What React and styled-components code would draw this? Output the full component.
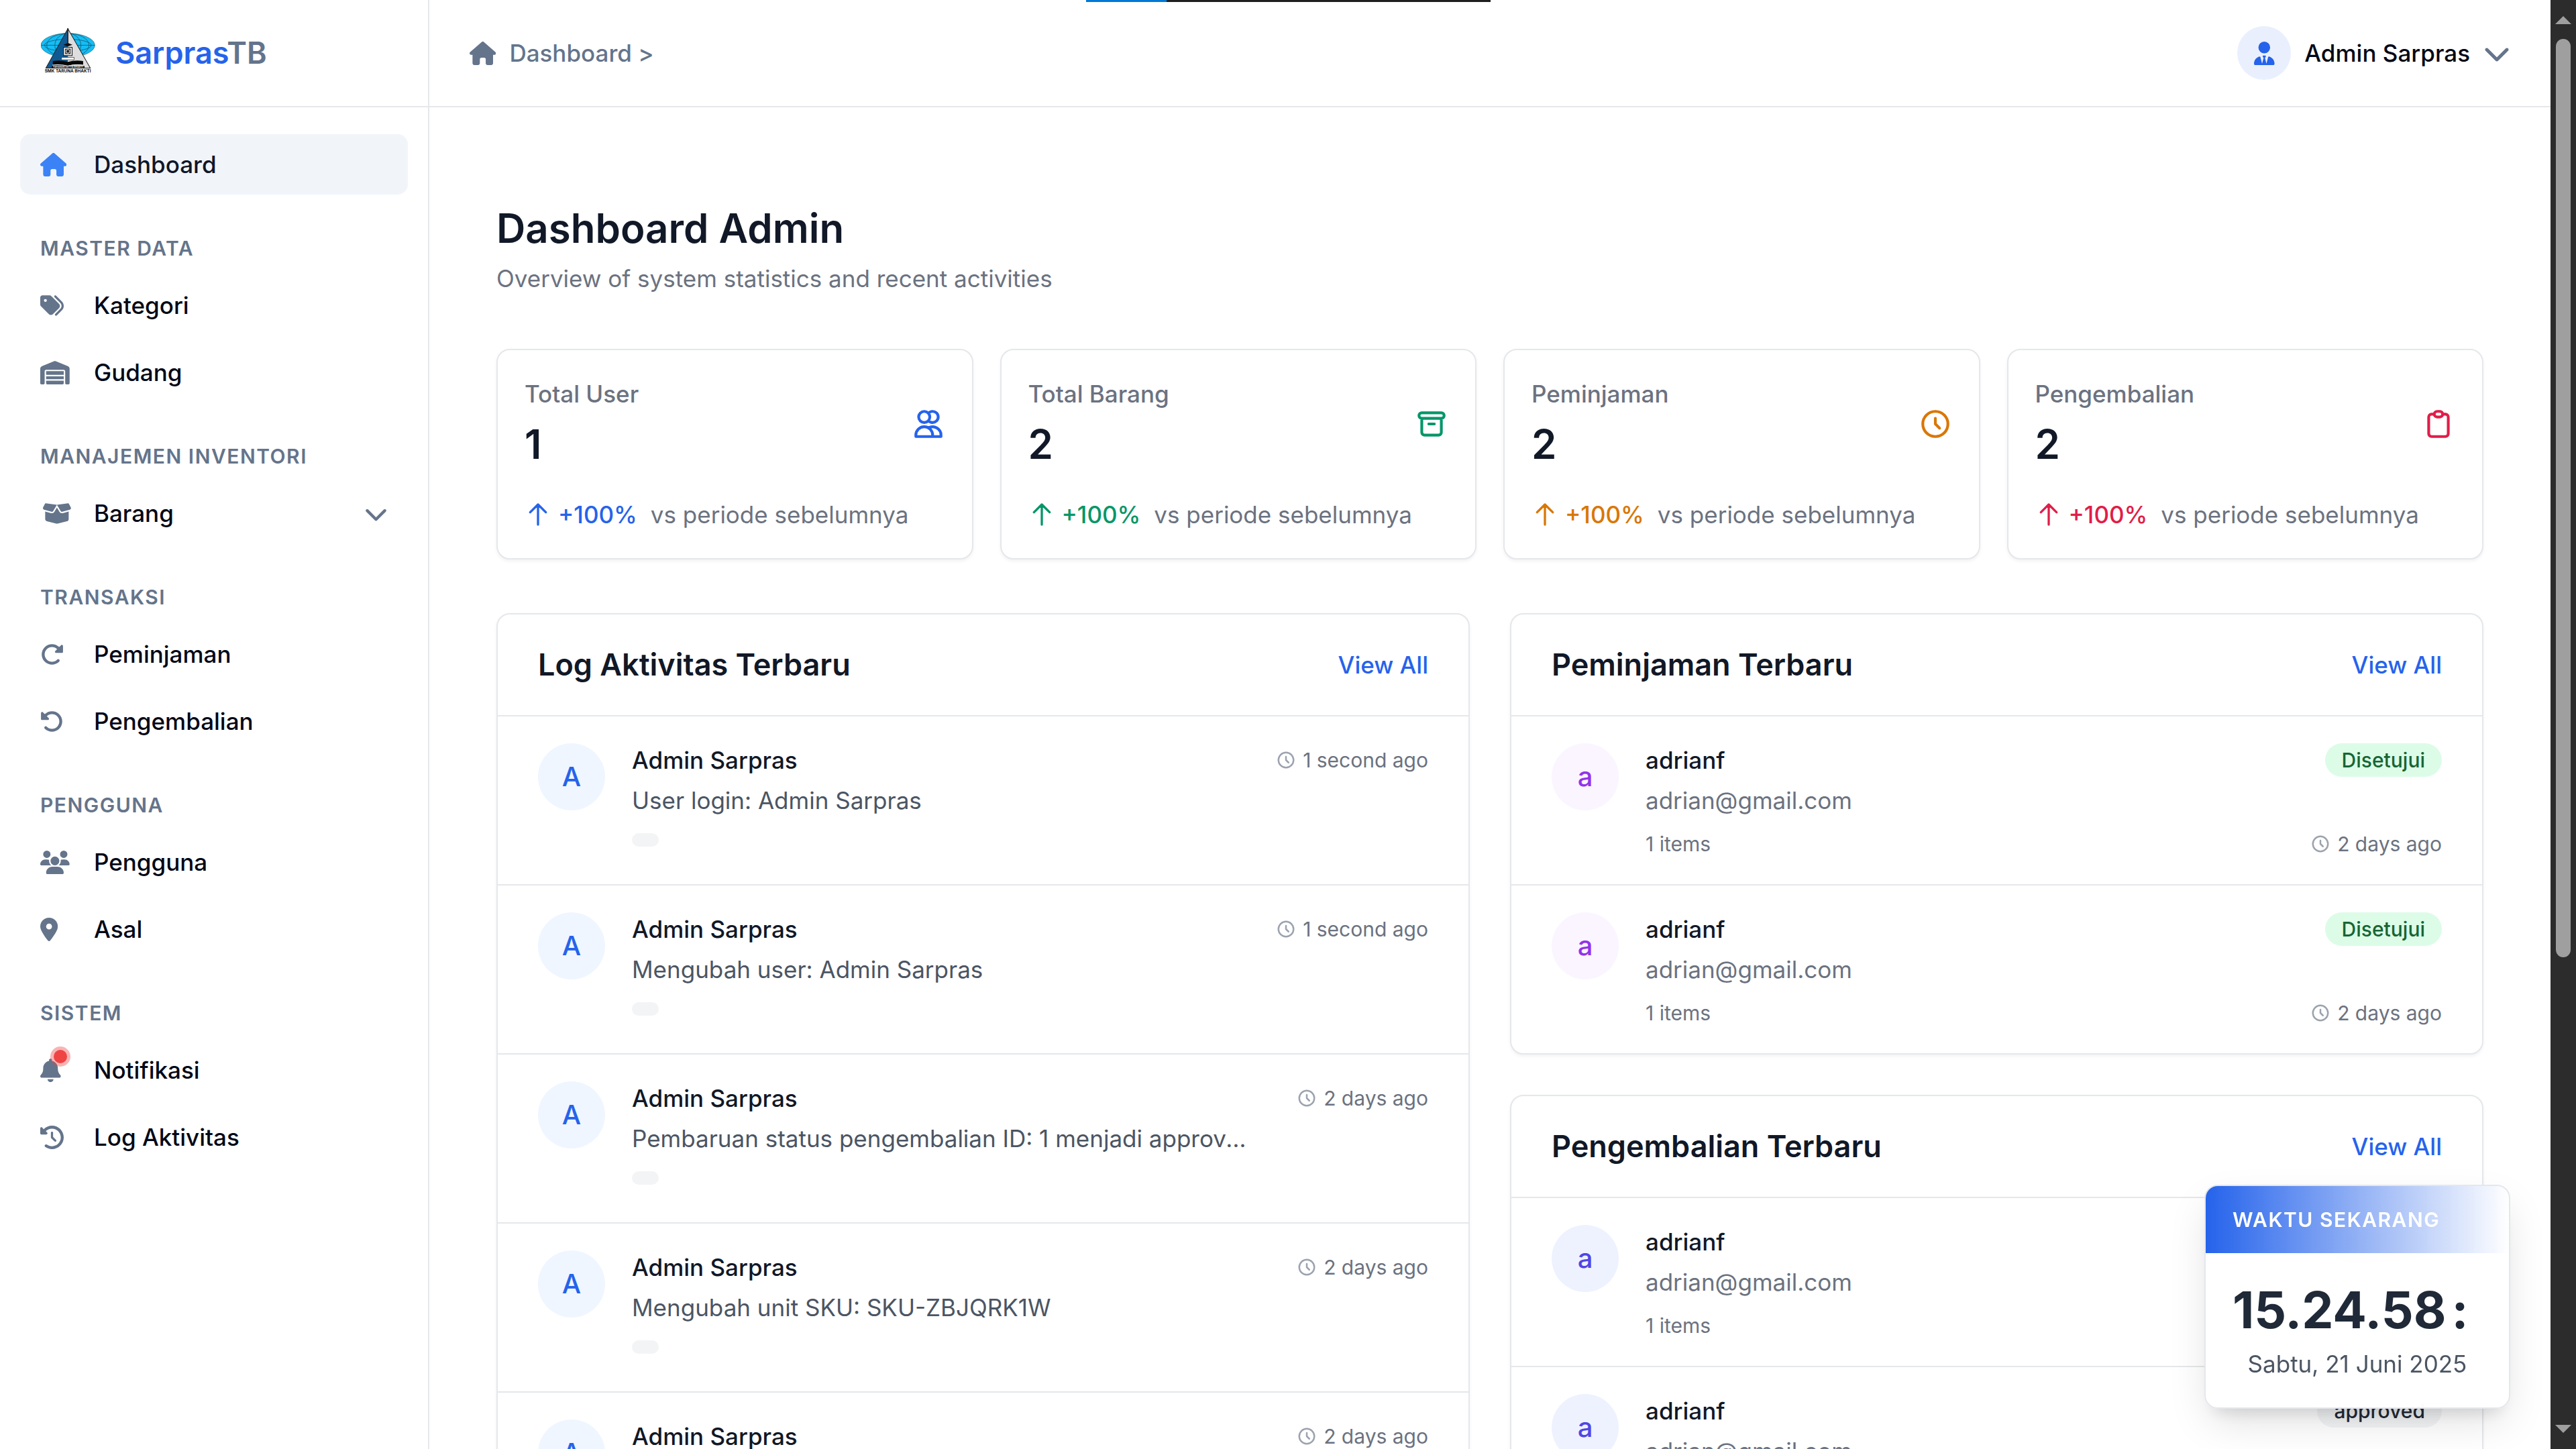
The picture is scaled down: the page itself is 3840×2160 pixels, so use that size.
import React from "react";
import styled, { createGlobalStyle, css } from "styled-components";
import {
  FaHouse,
  FaTags,
  FaWarehouse,
  FaBoxOpen,
  FaRotateRight,
  FaRotateLeft,
  FaUsers,
  FaLocationDot,
  FaBell,
  FaClockRotateLeft,
  FaChevronDown,
  FaUserTie,
} from "react-icons/fa6";
import {
  HiOutlineUsers,
  HiOutlineArchive,
  HiOutlineClock,
  HiOutlineClipboard,
  HiOutlineArrowUp,
} from "react-icons/hi";

const GlobalStyle = createGlobalStyle`
  *, *::before, *::after { box-sizing: border-box; }
  html, body { margin: 0; background: #ffffff; overflow: hidden; }
  body {
    font-family: Inter, "Liberation Sans", sans-serif;
    font-size: 35px;
    line-height: 50px;
    color: #020817;
  }
  svg { display: block; flex-shrink: 0; }
`;

const line = "2px solid #e5e7eb";

/* Solid glyphs share one height; their width follows the glyph's own grid. */
const glyphSize = css`
  svg {
    height: 35px;
    width: ${(p) => ((p.$grid || 512) * 35) / 512}px;
  }
`;

const Screen = styled.div`
  position: relative;
  display: flex;
  width: 3840px;
  height: 2160px;
  overflow: hidden;
`;

/* ---------- sidebar ---------- */

const Sidebar = styled.aside`
  width: 640px;
  flex-shrink: 0;
  border-right: ${line};
`;

const Brand = styled.div`
  display: flex;
  align-items: center;
  gap: 30px;
  height: 160px;
  padding: 0 60px;
  border-bottom: ${line};
  font-size: 45px;
  line-height: 70px;
  font-weight: 600;
  color: #64748b;
  b {
    font-weight: 600;
    color: #2563eb;
  }
`;

const LogoImage = styled.svg`
  width: 81px;
  height: 67px;
  margin: -7px 0 0 1px;
`;

const Nav = styled.nav`
  display: flex;
  flex-direction: column;
  gap: 60px;
  padding: 40px 30px;
`;

const NavGroup = styled.div`
  display: flex;
  flex-direction: column;
  gap: 10px;
`;

const NavLabel = styled.h3`
  margin: 0 0 10px;
  padding: 0 30px;
  font-size: 30px;
  line-height: 40px;
  font-weight: 600;
  letter-spacing: 1.5px;
  text-transform: uppercase;
  color: #64748b;
`;

const NavItem = styled.a`
  display: flex;
  align-items: center;
  gap: 30px;
  height: 90px;
  padding: 0 30px;
  border-radius: 15px;
  font-weight: 500;
  ${(p) =>
    p.$active &&
    css`
      background: #f1f5f9;
      color: #0f172a;
    `}
`;

const NavIcon = styled.span`
  position: relative;
  display: flex;
  justify-content: ${(p) => (p.$centered ? "center" : "flex-start")};
  width: 50px;
  color: ${(p) => (p.$active ? "#3b82f6" : "#64748b")};
  ${glyphSize}
`;

const NavText = styled.span`
  flex: 1;
`;

const Chevron = styled(FaChevronDown)`
  width: ${(p) => p.$size}px;
  height: ${(p) => p.$size}px;
  color: #64748b;
`;

const AlertDot = styled.span`
  position: absolute;
  left: 15px;
  top: -18px;
  width: 30px;
  height: 30px;
  border-radius: 50%;
  background: rgba(239, 68, 68, 0.4);
  &::after {
    content: "";
    position: absolute;
    inset: 5px;
    border-radius: 50%;
    background: #ef4444;
  }
`;

/* ---------- main column ---------- */

const Main = styled.main`
  flex: 1;
  min-width: 0;
`;

const TopBar = styled.header`
  display: flex;
  align-items: center;
  justify-content: space-between;
  height: 160px;
  padding: 0 60px;
  border-bottom: ${line};
`;

const Breadcrumb = styled.div`
  display: flex;
  align-items: center;
  gap: 20px;
  font-weight: 500;
  color: #64748b;
  ${glyphSize}
`;

const UserMenu = styled.div`
  display: flex;
  align-items: center;
  gap: 20px;
  font-weight: 500;
`;

const UserBadge = styled.span`
  display: flex;
  align-items: center;
  justify-content: center;
  width: 80px;
  height: 80px;
  border-radius: 50%;
  background: #e9effd;
  color: #2563eb;
  ${glyphSize}
`;

const Content = styled.div`
  padding: 140px 100px 0;
`;

const PageTitle = styled.h1`
  margin: 0;
  font-size: 60px;
  line-height: 80px;
  font-weight: 600;
  color: #111827;
`;

const PageLead = styled.p`
  margin: 10px 0 80px;
  color: #6b7280;
`;

const StatGrid = styled.section`
  display: grid;
  grid-template-columns: repeat(4, 1fr);
  gap: 40px;
`;

const cardSurface = css`
  background: #ffffff;
  border: ${line};
  border-radius: 20px;
  box-shadow: 0 2.5px 5px rgba(0, 0, 0, 0.05);
`;

const StatCard = styled.article`
  ${cardSurface}
  padding: 40px;
`;

const StatTop = styled.div`
  display: flex;
  align-items: center;
  justify-content: space-between;
  color: ${(p) => p.$tone};
  svg {
    width: 50px;
    height: 50px;
  }
`;

const StatLabel = styled.div`
  font-weight: 500;
  color: #6b7280;
`;

const StatValue = styled.div`
  margin-top: 10px;
  font-size: 60px;
  line-height: 80px;
  font-weight: 600;
  color: #111827;
`;

const Trend = styled.div`
  display: flex;
  align-items: center;
  margin-top: 40px;
  color: #6b7280;
`;

const TrendRate = styled.span`
  display: flex;
  align-items: center;
  gap: 10px;
  margin-right: 20px;
  font-weight: 500;
  color: ${(p) => p.$tone};
  svg {
    width: 40px;
    height: 40px;
  }
`;

const PanelGrid = styled.section`
  display: grid;
  grid-template-columns: 1fr 1fr;
  align-items: start;
  gap: 60px;
  margin-top: 80px;
`;

const PanelStack = styled.div`
  display: flex;
  flex-direction: column;
  gap: 60px;
`;

const Panel = styled.article`
  ${cardSurface}
`;

const PanelHead = styled.div`
  display: flex;
  align-items: center;
  justify-content: space-between;
  height: 152px;
  padding: 0 60px;
  border-bottom: ${line};
`;

const PanelTitle = styled.h2`
  margin: 0;
  font-size: 45px;
  line-height: 70px;
  font-weight: 600;
  color: #111827;
`;

const PanelLink = styled.a`
  font-weight: 500;
  color: #2563eb;
`;

const Row = styled.div`
  display: flex;
  gap: 40px;
  padding: 40px 60px;
  & + & {
    border-top: ${line};
  }
`;

const avatarTones = {
  blue: css`
    background: #eff6ff;
    color: #2563eb;
  `,
  purple: css`
    background: #faf5ff;
    color: #9333ea;
  `,
  indigo: css`
    background: #eef2ff;
    color: #4f46e5;
  `,
};

const Avatar = styled.div`
  display: flex;
  align-items: center;
  justify-content: center;
  flex-shrink: 0;
  width: 100px;
  height: 100px;
  border-radius: 50%;
  font-size: 40px;
  font-weight: 500;
  ${(p) => avatarTones[p.$tone]}
`;

const RowBody = styled.div`
  flex: 1;
  min-width: 0;
`;

const RowLine = styled.div`
  display: flex;
  align-items: center;
  justify-content: space-between;
`;

const Name = styled.div`
  font-weight: 500;
  color: #111827;
`;

const Detail = styled.div`
  margin-top: 10px;
  max-width: ${(p) => (p.$clip ? "920px" : "none")};
  overflow: hidden;
  text-overflow: ellipsis;
  white-space: nowrap;
  color: ${(p) => (p.$muted ? "#6b7280" : "#4b5563")};
`;

const Meta = styled(RowLine)`
  height: 40px;
  margin-top: 20px;
  font-size: 30px;
  line-height: 40px;
  color: #6b7280;
`;

const EmptyTag = styled.span`
  width: 40px;
  height: 20px;
  margin-bottom: 12px;
  border-radius: 10px;
  background: #f3f4f6;
`;

const Time = styled.span`
  display: flex;
  align-items: center;
  gap: 10px;
  font-size: 30px;
  line-height: 40px;
  color: #6b7280;
  svg {
    width: 30px;
    height: 30px;
    color: #9ca3af;
  }
`;

const Status = styled.span`
  height: 50px;
  padding: 0 25px;
  border-radius: 25px;
  font-size: 30px;
  font-weight: 500;
  background: ${(p) => (p.$ok ? "#dcfce7" : "#f3f4f6")};
  color: ${(p) => (p.$ok ? "#166534" : "#1f2937")};
`;

/* ---------- overlays ---------- */

const ClockCard = styled.div`
  position: absolute;
  right: 98px;
  bottom: 60px;
  width: 456px;
  overflow: hidden;
  border: ${line};
  border-radius: 20px;
  background: rgba(255, 255, 255, 0.95);
  backdrop-filter: blur(20px);
  box-shadow: 0 25px 62px -8px rgba(0, 0, 0, 0.13), 0 20px 25px -15px rgba(0, 0, 0, 0.12);
`;

const ClockHead = styled.div`
  padding: 30px 40px;
  font-size: 30px;
  line-height: 40px;
  font-weight: 600;
  letter-spacing: 1.5px;
  color: #ffffff;
  background: linear-gradient(to right, #2563eb, rgba(37, 99, 235, 0));
`;

const ClockBody = styled.div`
  padding: 40px;
  text-align: center;
  color: #4b5563;
`;

const ClockTime = styled.div`
  display: flex;
  gap: 8px;
  margin-bottom: 10px;
  font-size: 75px;
  line-height: 90px;
  font-weight: 700;
  letter-spacing: -0.1px;
  color: #1f2937;
`;

const WindowGrip = styled.div`
  position: absolute;
  top: 0;
  left: 1619px;
  display: flex;
  width: 603px;
  height: 3px;
  background: #1f1f1f;
  &::before {
    content: "";
    width: 120px;
    background: #0078d4;
  }
`;

const Scrollbar = styled.div`
  display: flex;
  flex-direction: column;
  align-items: center;
  width: 38px;
  flex-shrink: 0;
  padding: 24px 0;
  background: #2c2c2c;
`;

const ScrollThumb = styled.div`
  width: 22px;
  height: 1369px;
  margin: 22px 0 auto;
  border-radius: 11px;
  background: #9f9f9f;
`;

const ScrollArrow = styled.div`
  border: 12px solid transparent;
  ${(p) =>
    p.$up
      ? css`
          border-top: 0;
          border-bottom-color: #9f9f9f;
        `
      : css`
          border-bottom: 0;
          border-top-color: #9f9f9f;
        `}
`;

/* ---------- data ---------- */

const navGroups = [
  { items: [{ text: "Dashboard", icon: FaHouse, grid: 576, active: true }] },
  {
    label: "Master Data",
    items: [
      { text: "Kategori", icon: FaTags },
      { text: "Gudang", icon: FaWarehouse, grid: 640 },
    ],
  },
  {
    label: "Manajemen Inventori",
    items: [{ text: "Barang", icon: FaBoxOpen, grid: 640, expandable: true }],
  },
  {
    label: "Transaksi",
    items: [
      { text: "Peminjaman", icon: FaRotateRight },
      { text: "Pengembalian", icon: FaRotateLeft },
    ],
  },
  {
    label: "Pengguna",
    items: [
      { text: "Pengguna", icon: FaUsers, grid: 640 },
      { text: "Asal", icon: FaLocationDot, grid: 384 },
    ],
  },
  {
    label: "Sistem",
    items: [
      { text: "Notifikasi", icon: FaBell, grid: 448, alert: true },
      { text: "Log Aktivitas", icon: FaClockRotateLeft },
    ],
  },
];

const stats = [
  { label: "Total User", value: 1, icon: HiOutlineUsers, tone: "#2563eb" },
  { label: "Total Barang", value: 2, icon: HiOutlineArchive, tone: "#059669" },
  { label: "Peminjaman", value: 2, icon: HiOutlineClock, tone: "#d97706" },
  { label: "Pengembalian", value: 2, icon: HiOutlineClipboard, tone: "#e11d48" },
];

const logs = [
  { detail: "User login: Admin Sarpras", time: "1 second ago" },
  { detail: "Mengubah user: Admin Sarpras", time: "1 second ago" },
  { detail: "Pembaruan status pengembalian ID: 1 menjadi approved", time: "2 days ago" },
  { detail: "Mengubah unit SKU: SKU-ZBJQRK1W", time: "2 days ago" },
  { detail: "Mengubah unit SKU: SKU-ZBJQRK1W", time: "2 days ago" },
];

/* ---------- parts ---------- */

function Logo() {
  return (
    <LogoImage viewBox="62 62 242 200">
      <ellipse cx="182" cy="138" rx="120" ry="53" fill="#14bdf5" stroke="#22606f" strokeWidth="2" />
      <g fill="none" stroke="#155a73" strokeWidth="2.5">
        <ellipse cx="182" cy="138" rx="94" ry="53" />
        <ellipse cx="182" cy="138" rx="58" ry="53" />
        <ellipse cx="182" cy="138" rx="104" ry="27" />
        <path d="M62 138H302" />
      </g>
      <path d="M182 64L84 240H182Z" fill="#105a94" />
      <path d="M182 64L282 240H182Z" fill="#dedede" />
      <path d="M182 64L84 240H282Z" fill="none" stroke="#222" strokeWidth="3" />
      <path d="M182 62V132" stroke="#111" strokeWidth="4" />
      <path d="M162 136l20-8 20 8-20 7z" fill="#111" />
      <rect x="163" y="147" width="38" height="37" fill="#eee" stroke="#111" strokeWidth="3" />
      <rect x="170" y="153" width="24" height="24" fill="#222" />
      <circle cx="182" cy="165" r="8" fill="none" stroke="#ddd" strokeWidth="3" />
      <rect x="154" y="192" width="56" height="11" fill="#f1f1f1" stroke="#333" strokeWidth="2" />
      <path d="M115 208q34-6 67 4q33-10 68-4v18q-35-6-68 3q-33-9-67-3z" fill="#080808" />
      <path d="M113 226q36-4 69 4q33-8 69-4" fill="none" stroke="#eee" strokeWidth="3" />
      <rect x="110" y="230" width="146" height="10" fill="#111" />
      <text x="183" y="239" fontSize="10" fontWeight="700" fill="#eee" textAnchor="middle" textLength="134" lengthAdjust="spacingAndGlyphs">
        YAYASAN SETYA BHAKTI
      </text>
      <text x="182" y="259" fontSize="18" fontWeight="700" fill="#111" textAnchor="middle" textLength="206" lengthAdjust="spacingAndGlyphs">
        SMK TARUNA BHAKTI
      </text>
    </LogoImage>
  );
}

function NavLink({ text, icon: Icon, grid, active, expandable, alert }) {
  return (
    <NavItem $active={active}>
      <NavIcon $active={active} $centered={expandable} $grid={grid}>
        <Icon />
        {alert && <AlertDot />}
      </NavIcon>
      <NavText>{text}</NavText>
      {expandable && <Chevron $size={35} />}
    </NavItem>
  );
}

function Ago({ children }) {
  return (
    <Time>
      <HiOutlineClock />
      {children}
    </Time>
  );
}

function PanelHeader({ title }) {
  return (
    <PanelHead>
      <PanelTitle>{title}</PanelTitle>
      <PanelLink>View All</PanelLink>
    </PanelHead>
  );
}

function LoanRow({ tone, status, ok }) {
  return (
    <Row>
      <Avatar $tone={tone}>a</Avatar>
      <RowBody>
        <RowLine>
          <Name>adrianf</Name>
          <Status $ok={ok}>{status}</Status>
        </RowLine>
        <Detail $muted>adrian@gmail.com</Detail>
        <Meta>
          1 items
          <Ago>2 days ago</Ago>
        </Meta>
      </RowBody>
    </Row>
  );
}

export default function App() {
  return (
    <>
      <GlobalStyle />
      <Screen>
        <Sidebar>
          <Brand>
            <Logo />
            <span>
              <b>Sarpras</b>TB
            </span>
          </Brand>
          <Nav>
            {navGroups.map((group, i) => (
              <NavGroup key={i}>
                {group.label && <NavLabel>{group.label}</NavLabel>}
                {group.items.map((item) => (
                  <NavLink key={item.text} {...item} />
                ))}
              </NavGroup>
            ))}
          </Nav>
        </Sidebar>

        <Main>
          <TopBar>
            <Breadcrumb $grid={576}>
              <FaHouse />
              <span>Dashboard &gt;</span>
            </Breadcrumb>
            <UserMenu>
              <UserBadge $grid={448}>
                <FaUserTie />
              </UserBadge>
              Admin Sarpras
              <Chevron $size={40} />
            </UserMenu>
          </TopBar>

          <Content>
            <PageTitle>Dashboard Admin</PageTitle>
            <PageLead>Overview of system statistics and recent activities</PageLead>

            <StatGrid>
              {stats.map(({ label, value, icon: Icon, tone }) => (
                <StatCard key={label}>
                  <StatTop $tone={tone}>
                    <div>
                      <StatLabel>{label}</StatLabel>
                      <StatValue>{value}</StatValue>
                    </div>
                    <Icon />
                  </StatTop>
                  <Trend>
                    <TrendRate $tone={tone}>
                      <HiOutlineArrowUp />
                      +100%
                    </TrendRate>
                    vs periode sebelumnya
                  </Trend>
                </StatCard>
              ))}
            </StatGrid>

            <PanelGrid>
              <Panel>
                <PanelHeader title="Log Aktivitas Terbaru" />
                {logs.map((log, i) => (
                  <Row key={i}>
                    <Avatar $tone="blue">A</Avatar>
                    <RowBody>
                      <RowLine>
                        <Name>Admin Sarpras</Name>
                        <Ago>{log.time}</Ago>
                      </RowLine>
                      <Detail $clip>{log.detail}</Detail>
                      <Meta>
                        <EmptyTag />
                      </Meta>
                    </RowBody>
                  </Row>
                ))}
              </Panel>

              <PanelStack>
                <Panel>
                  <PanelHeader title="Peminjaman Terbaru" />
                  <LoanRow tone="purple" status="Disetujui" ok />
                  <LoanRow tone="purple" status="Disetujui" ok />
                </Panel>
                <Panel>
                  <PanelHeader title="Pengembalian Terbaru" />
                  <LoanRow tone="indigo" status="approved" />
                  <LoanRow tone="indigo" status="approved" />
                </Panel>
              </PanelStack>
            </PanelGrid>
          </Content>
        </Main>

        <Scrollbar>
          <ScrollArrow $up />
          <ScrollThumb />
          <ScrollArrow />
        </Scrollbar>

        <ClockCard>
          <ClockHead>WAKTU SEKARANG</ClockHead>
          <ClockBody>
            <ClockTime>
              <span>15.24.58</span>
              <span>:</span>
            </ClockTime>
            Sabtu, 21 Juni 2025
          </ClockBody>
        </ClockCard>
        <WindowGrip />
      </Screen>
    </>
  );
}
